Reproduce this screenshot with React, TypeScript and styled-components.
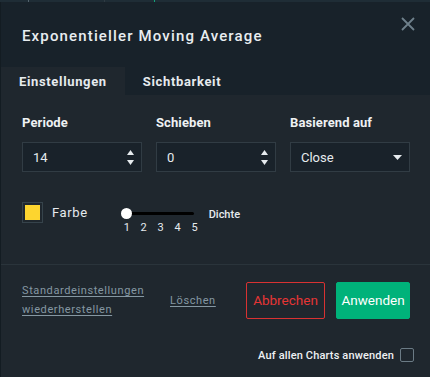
import styled, { createGlobalStyle } from "styled-components";

const GlobalStyle = createGlobalStyle`
  html, body {
    margin: 0;
    padding: 0;
    background: #131c22;
  }
  body {
    font-family: Roboto, "Liberation Sans", sans-serif;
    -webkit-font-smoothing: antialiased;
  }
`;

const TopStrip = styled.div`
  height: 2px;
  background: #1f2d36;
  display: flex;
`;

const StripMark = styled.span<{ $left: number; $color: string }>`
  width: 1px;
  height: 2px;
  margin-left: ${({ $left }) => $left}px;
  background: ${({ $color }) => $color};
`;

const Dialog = styled.div`
  margin-left: 1px;
  width: 429px;
  height: 375px;
  background: #1f272e;
  display: flex;
  flex-direction: column;
  color: #e6ebee;
`;

const Header = styled.div`
  height: 65px;
  background: #18222a;
  display: flex;
  align-items: center;
  justify-content: space-between;
  padding: 0 14px 0 21px;
  box-sizing: border-box;
`;

const Title = styled.div`
  font-size: 15px;
  font-weight: 500;
  letter-spacing: 1.15px;
  color: #e8edf0;
  margin-top: 3px;
`;

const CloseButton = styled.div`
  width: 16px;
  height: 16px;
  align-self: flex-start;
  margin-top: 14px;
`;

const Tabs = styled.div`
  height: 28px;
  background: #18222a;
  display: flex;
`;

const Tab = styled.div<{ $active?: boolean }>`
  padding: 0 18px;
  display: flex;
  align-items: center;
  font-size: 13px;
  font-weight: 700;
  letter-spacing: 0.65px;
  color: #e6ebee;
  background: ${({ $active }) => ($active ? "#1f272e" : "transparent")};
`;

const Body = styled.div`
  padding: 20px 20px 0 21px;
  height: 170px;
  box-sizing: border-box;
  border-bottom: 1px solid #2a343b;
`;

const FieldGrid = styled.div`
  display: grid;
  grid-template-columns: 120px 120px 120px;
  column-gap: 14px;
`;

const Field = styled.div`
  display: flex;
  flex-direction: column;
`;

const Label = styled.div`
  font-size: 13px;
  font-weight: 700;
  line-height: 16px;
  color: #eef1f3;
  margin-bottom: 11px;
  letter-spacing: 0.1px;
`;

const InputBox = styled.div`
  height: 30px;
  box-sizing: border-box;
  border: 1px solid #313c44;
  background: #19222a;
  display: flex;
  align-items: center;
  justify-content: space-between;
  padding: 0 7px 0 10px;
  font-size: 13px;
  color: #e6ebee;
`;

const Spinner = styled.div`
  display: flex;
  flex-direction: column;
  gap: 5px;
  align-items: center;
`;

const ColorRow = styled.div`
  display: flex;
  align-items: flex-start;
  margin-top: 30px;
`;

const Swatch = styled.div`
  width: 21px;
  height: 21px;
  box-sizing: border-box;
  border: 1px solid #36434b;
  display: flex;
  align-items: center;
  justify-content: center;
`;

const SwatchFill = styled.div<{ $color: string }>`
  width: 15px;
  height: 15px;
  background: ${({ $color }) => $color};
`;

const ColorLabel = styled.div`
  font-size: 13px;
  font-weight: 400;
  margin-left: 9px;
  line-height: 21px;
  color: #e6ebee;
  letter-spacing: 0.6px;
`;

const SliderWrap = styled.div`
  margin-left: 33px;
  width: 79px;
  margin-top: 6px;
`;

const SliderTrack = styled.div`
  position: relative;
  height: 12px;
`;

const TrackLine = styled.div`
  position: absolute;
  left: 6px;
  right: 6px;
  top: 4px;
  height: 3px;
  border-radius: 2px;
  background: #000;
`;

const Thumb = styled.div`
  position: absolute;
  left: 0;
  top: 0;
  width: 11px;
  height: 11px;
  border-radius: 50%;
  background: #fff;
`;

const Ticks = styled.div`
  display: flex;
  justify-content: space-between;
  padding: 0 2px 0 3px;
  margin-top: 2px;
  font-size: 11px;
  line-height: 12px;
  color: #e6ebee;
`;

const DensityLabel = styled.div`
  font-size: 11px;
  font-weight: 500;
  margin-left: 9px;
  line-height: 21px;
  color: #e6ebee;
  margin-top: 2px;
`;

const Footer = styled.div`
  display: flex;
  flex-direction: column;
  padding: 16px 20px 0 21px;
`;

const ActionRow = styled.div`
  display: flex;
  align-items: center;
`;

const LinkText = styled.div`
  font-size: 11px;
  line-height: 19px;
  color: #8597a2;
  text-decoration: underline;
  text-underline-offset: 2px;
  letter-spacing: 0.6px;
`;

const ResetLink = styled(LinkText)`
  width: 148px;
`;

const Spacer = styled.div`
  flex: 1;
`;

const Button = styled.div<{ $variant: "outline" | "primary" }>`
  height: 37px;
  width: ${({ $variant }) => ($variant === "outline" ? 79 : 74)}px;
  box-sizing: border-box;
  display: flex;
  align-items: center;
  justify-content: center;
  border-radius: 2px;
  font-size: 13.5px;
  font-weight: 400;
  border: 1px solid ${({ $variant }) => ($variant === "outline" ? "#d83232" : "#00b27a")};
  background: ${({ $variant }) => ($variant === "outline" ? "transparent" : "#00b27a")};
  color: ${({ $variant }) => ($variant === "outline" ? "#e53535" : "#ffffff")};
`;

const ButtonGroup = styled.div`
  display: flex;
  gap: 11px;
`;

const ApplyAllRow = styled.div`
  display: flex;
  align-items: center;
  justify-content: flex-end;
  gap: 6px;
  margin-top: 29px;
  margin-right: -4px;
  font-size: 11px;
  font-weight: 500;
  letter-spacing: 0.15px;
  color: #eef1f3;
`;

const CheckBox = styled.div`
  width: 14px;
  height: 14px;
  box-sizing: border-box;
  border: 1px solid #6b7b85;
  border-radius: 2px;
`;

const Arrow = ({ up }: { up?: boolean }) => (
  <svg width="7" height="5" viewBox="0 0 7 5">
    <path d={up ? "M3.5 0 L7 5 L0 5 Z" : "M0 0 L7 0 L3.5 5 Z"} fill="#e6ebee" />
  </svg>
);

const App = () => {
  return (
    <>
      <GlobalStyle />
      <TopStrip>
        <StripMark $left={28} $color="#55656f" />
        <StripMark $left={75} $color="#2f3b43" />
        <StripMark $left={49} $color="#13a37a" />
      </TopStrip>
      <Dialog>
        <Header>
          <Title>Exponentieller Moving Average</Title>
          <CloseButton>
            <svg width="16" height="16" viewBox="0 0 16 16">
              <path d="M2 2 L14 14 M14 2 L2 14" stroke="#6e808b" strokeWidth="1.8" />
            </svg>
          </CloseButton>
        </Header>
        <Tabs>
          <Tab $active>Einstellungen</Tab>
          <Tab>Sichtbarkeit</Tab>
        </Tabs>
        <Body>
          <FieldGrid>
            <Field>
              <Label>Periode</Label>
              <InputBox>
                <span>14</span>
                <Spinner>
                  <Arrow up />
                  <Arrow />
                </Spinner>
              </InputBox>
            </Field>
            <Field>
              <Label>Schieben</Label>
              <InputBox>
                <span>0</span>
                <Spinner>
                  <Arrow up />
                  <Arrow />
                </Spinner>
              </InputBox>
            </Field>
            <Field>
              <Label>Basierend auf</Label>
              <InputBox>
                <span>Close</span>
                <svg width="9" height="5" viewBox="0 0 9 5">
                  <path d="M0 0 L9 0 L4.5 5 Z" fill="#e6ebee" />
                </svg>
              </InputBox>
            </Field>
          </FieldGrid>
          <ColorRow>
            <Swatch>
              <SwatchFill $color="#fdd52f" />
            </Swatch>
            <ColorLabel>Farbe</ColorLabel>
            <SliderWrap>
              <SliderTrack>
                <TrackLine />
                <Thumb />
              </SliderTrack>
              <Ticks>
                <span>1</span>
                <span>2</span>
                <span>3</span>
                <span>4</span>
                <span>5</span>
              </Ticks>
            </SliderWrap>
            <DensityLabel>Dichte</DensityLabel>
          </ColorRow>
        </Body>
        <Footer>
          <ActionRow>
            <ResetLink>
              Standardeinstellungen
              <br />
              wiederherstellen
            </ResetLink>
            <LinkText>Löschen</LinkText>
            <Spacer />
            <ButtonGroup>
              <Button $variant="outline">Abbrechen</Button>
              <Button $variant="primary">Anwenden</Button>
            </ButtonGroup>
          </ActionRow>
          <ApplyAllRow>
            <span>Auf allen Charts anwenden</span>
            <CheckBox />
          </ApplyAllRow>
        </Footer>
      </Dialog>
    </>
  );
};

export default App;
